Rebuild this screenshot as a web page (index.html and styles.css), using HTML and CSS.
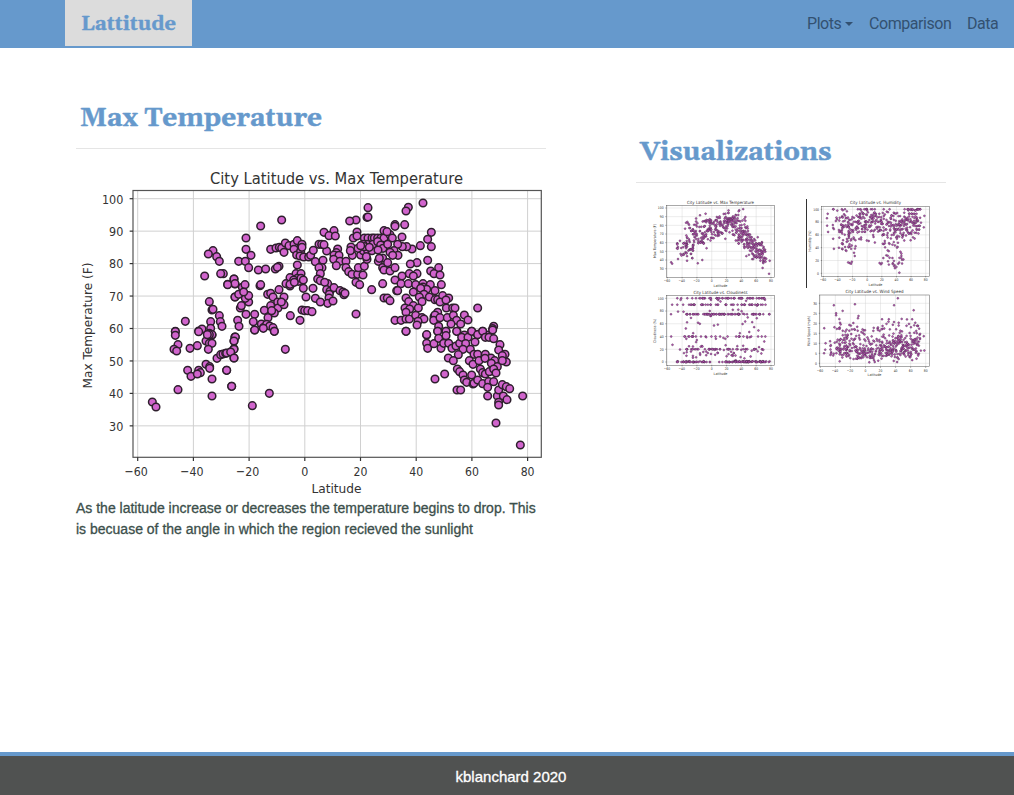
FILE: index.html
```html
<!DOCTYPE html>
<html lang="en">
<head>
<meta charset="utf-8">
<title>Lattitude</title>
<link rel="stylesheet" href="styles.css">
</head>
<body>
<nav class="navbar">
  <a class="brand">Lattitude</a>
  <div class="links">
    <a class="link plots">Plots<span class="caret"></span></a>
    <a class="link comparison">Comparison</a>
    <a class="link data">Data</a>
  </div>
</nav>
<main class="content">
  <section class="article">
    <h2 class="title">Max Temperature</h2>
    <svg class="plot" id="main" width="470" height="332" viewBox="0 0 470 332"></svg>
    <p class="summary">As the latitude increase or decreases the temperature begins to drop. This<br>is becuase of the angle in which the region recieved the sunlight</p>
  </section>
  <aside class="sidebar">
    <h2 class="title">Visualizations</h2>
    <div class="thumbs">
      <svg class="plot" id="temp" width="125" height="90" viewBox="0 0 125 90"></svg>
      <svg class="plot" id="humidity" width="125" height="90" viewBox="0 0 125 90"></svg>
      <svg class="plot" id="clouds" width="125" height="90" viewBox="0 0 125 90"></svg>
      <svg class="plot" id="wind" width="125" height="90" viewBox="0 0 125 90"></svg>
    </div>
  </aside>
</main>
<footer class="footer"><span>kblanchard 2020</span></footer>
<script src="charts.js"></script>
</body>
</html>
```
FILE: styles.css
```css
* { box-sizing: border-box; }
body {
  margin: 0;
  height: 795px;
  display: flex;
  flex-direction: column;
  background: #fff;
  color: #2f4f4f;
  font-family: "Liberation Sans", Arial, sans-serif;
  overflow: hidden;
}
.navbar {
  height: 48px;
  flex: none;
  display: flex;
  justify-content: space-between;
  align-items: flex-start;
  padding: 0 15px 0 65px;
  background: #6699cc;
}
.brand {
  width: 127px;
  height: 46px;
  background: #dcdcdc;
  color: #6699cc;
  font: bold 20px/48px Gelasio, Georgia, "DejaVu Serif Condensed", "DejaVu Serif", serif;
  text-align: center;
  -webkit-text-stroke: 0.4px;
}
.links { display: flex; gap: 16px; height: 48px; align-items: center; }
.link {
  display: flex;
  align-items: center;
  color: #335171;
  font: 16px/24px Roboto, sans-serif;
  letter-spacing: -0.45px;
  white-space: nowrap;
}
.plots { width: 46px; }
.comparison { width: 82px; }
.data { width: 32px; }
.caret {
  margin-left: 4px;
  border-top: 4.5px solid #335171;
  border-left: 4.5px solid transparent;
  border-right: 4.5px solid transparent;
}
.content { flex: 1; display: flex; gap: 90px; padding: 48px 68px 0 76px; }
.article { width: 470px; }
.sidebar { width: 310px; margin-top: 34px; }
.title {
  height: 53px;
  margin: 0 0 16px;
  padding: 0 4px;
  border-bottom: 1px solid #e5e5e5;
  color: #6699cc;
  font: bold 26.2px/46px Gelasio, Georgia, "DejaVu Serif Condensed", "DejaVu Serif", serif;
  white-space: nowrap;
  -webkit-text-stroke: 0.5px;
}
.plot { display: block; overflow: visible; font-family: "DejaVu Sans", sans-serif; fill: #333; }
.thumbs { display: grid; grid-template-columns: 125px 125px; column-gap: 30px; padding-left: 15px; }
.summary { margin: 1px 0 0; font-size: 14px; line-height: 21px; white-space: nowrap; color: #3c4f4b; -webkit-text-stroke: 0.3px; }
.footer {
  height: 43px;
  flex: none;
  border-top: 4px solid #6699cc;
  background: #505251;
  color: #fff;
  font-size: 15px;
  line-height: 42px;
  text-align: center;
  padding-left: 8px;
  -webkit-text-stroke: 0.3px;
}
```
FILE: charts.js
```js
// City samples, in thirds of a pixel, stored by plot tile: [tile x, tile y, "x,y ..."].
const tiles = [
[0,0,"411,257 397,267 422,275 430,289 386,333 442,326 434,326 474,342 455,358 400,410 408,435 411,433 430,452 404,470 433,470 438,484 328,469 298,499 368,498 378,492 404,490 400,505 408,510 477,396 477,357"],
[450,0,"426,128 423,157 426,156 390,165 371,168 167,165 104,183 60,219 60,253 75,271 38,289 58,289 68,308 97,315 119,312 148,312 159,304 154,307 134,253 150,249 160,247 167,249 178,234 174,262 189,242 204,238 214,227 228,238 204,253 212,270 224,258 222,273 233,276 228,247 214,300 248,276 254,271 262,256 268,290 291,286 302,258 279,238 287,238 294,239 294,202 324,197 309,212 328,213 393,201 382,219 393,213 335,252 331,263 324,270 339,271 323,283 342,289 331,302 360,289 360,308 368,320 379,271 375,246 373,257 378,328 395,328 411,330 397,308 415,304 390,352 401,359 437,374 470,356 474,399 470,279 457,289 460,280 470,308 474,315 404,270 412,257 423,283 425,257 438,257 415,219 426,219 438,219 445,219 455,219 465,219 474,197 474,219 423,238 441,238 455,230 464,240 471,250 411,238 415,245 430,247 456,255 396,250 404,242 421,275 288,308 279,308 283,326 275,342 283,347 305,356 296,352 302,374 312,379 324,368 310,388 342,377 351,381 354,389 357,385 309,399 305,415 321,408 268,400 283,411 261,370 240,396 232,370 210,326 225,326 214,340 192,338 203,345 218,349 180,356 192,363 192,358 205,352 225,340 232,345 159,374 174,396 125,388 134,385 141,396 155,411 134,422 156,429 174,419 145,444 115,436 126,458 137,437 193,452 222,466 228,435 236,437 245,437 258,440 60,448 86,448 82,470 86,495 106,477 112,488 122,478 131,483 141,488 145,499 35,466 39,484 43,429 46,422 68,411 58,400 27,396 38,388 68,392 49,367 57,359 53,381 24,342 27,356 5,359 102,362 104,359 27,516 390,447 166,411"],
[930,0,"111,114 67,127 60,138 27,179 27,184 56,179 136,202 125,223 136,245 103,242 78,252 62,245 49,245 48,216 35,238 12,209 19,219 5,238 3,200 24,257 12,262 36,271 20,271 5,293 12,318 27,308 27,345 48,333 125,286 93,293 73,297 158,308 134,318 144,326 162,330 93,326 70,326 82,333 45,356 67,356 89,359 111,356 133,359 166,359 111,366 122,373 147,377 32,377 35,377 82,381 104,370 114,388 100,396 130,396 60,399 68,410 108,410 82,422 57,429 71,432 97,429 60,442 4,399 12,407 147,404 155,404 170,392 162,411 188,399 181,429 200,429 207,429 180,405 275,429 155,442 144,455 147,450 143,466 162,458 184,458 202,451 235,450 246,465 212,466 224,477 195,477 158,484 27,466 45,466 60,462 70,462 89,451 108,458 114,462 96,469 93,480 60,499 122,510 155,499 180,499 213,499 257,499 290,499 323,484 320,491 274,508 235,510 302,510"],
[0,495,"298,5 298,16 368,5 306,44 294,58 302,63 342,55 364,47 408,14 400,14 390,33 400,40 408,40 397,58 394,14 335,121 345,139 368,121 373,128 364,132 390,103 401,110 401,115 408,147 452,121 467,169 408,198 306,179 229,216 240,231 423,85 434,74 441,72 449,70 464,66 474,56 474,84 474,33 477,22"],
[450,495,"28,21 24,33 24,58 2,69 14,66 24,84 2,121 17,169 79,227 130,190 178,58 86,0 112,-5 145,4"],
[930,495,"60,4 122,14 155,4 180,4 212,4 122,40 125,55 144,41 158,25 165,55 173,40 180,17 188,40 198,55 210,48 221,40 227,22 246,22 239,41 231,58 217,74 187,84 202,92 257,4 267,36 253,58 275,14 290,4 298,22 309,22 323,26 320,0 342,44 338,60 264,73 275,73 298,73 315,84 357,73 349,77 361,96 250,92 261,103 279,92 297,85 326,92 316,100 334,110 283,117 290,128 298,132 310,125 323,117 330,129 349,92 214,117 221,125 231,135 257,135 235,150 242,157 261,162 264,160 275,150 290,161 308,155 323,155 305,172 305,198 334,198 338,180 349,164 361,170 371,176 352,198 363,209 338,217 338,225 410,198 330,279 403,345 176,132 147,147 213,180 224,180"]
];
const temps = [];
for (const [ox, oy, list] of tiles)
  for (const pair of list.split(" ")) {
    const [x, y] = pair.split(",").map(Number);
    const px = (ox + x) / 3, py = (oy + y) / 3;
    temps.push([-60 + (px - 61.7) / 2.785, 100 - (py - 33.7) / 3.245]);
  }
const lats = temps.map(p => p[0]);

let seed = 41;
const rnd = () => (seed = (seed * 16807) % 2147483647) / 2147483647;
const near = (c, s) => c + s * (rnd() + rnd() + rnd() - 1.5);

const humidity = lats.map(l => {
  const r = rnd();
  let v;
  if (l > 15 && l < 50 && r < 0.36) v = 12 + rnd() * 58;
  else if (l < -15 && r < 0.4) v = 34 + rnd() * 45;
  else if (r < 0.06) v = 100;
  else if (r < 0.12) v = 93;
  else v = near(l > -10 && l < 20 ? 80 : 79, 26);
  return [l, Math.min(100, v)];
}).concat([[44,1],[-24,16],[-26,17],[-22,15],[-21,18],[-17,27],[-18,32],[38,8],[40,10],[37,11],[-55,86],[-54,93]]);

const clouds = lats.map(l => {
  const r = rnd();
  const band = r < .22 ? 0 : r < .3 ? 1 : r < .42 ? 75 : r < .52 ? 90 : r < .64 ? 100 : r < .7 ? 40 : r < .76 ? 20 : -1;
  let v = band < 0 ? rnd() * (rnd() < .4 ? 25 : 98) : band;
  if (l > -10 && l < 18 && v < 2) v = rnd() < .2 ? 0 : 75;
  return [l, v];
}).concat([[-55,75],[-53,27],[78,75],[77,0]]);

const wind = lats.map(l => {
  const base = l > -20 && l < 15 ? 2 : l > 55 ? 4 : 3;
  return [l, Math.max(.5, base + near(3, 4.5) + Math.pow(rnd(), 3.5) * 15)];
}).concat([[-42,29],[-14,29.5],[38,29],[43,32.5],[64,26.5],[-39,25],[-39,24],[-10,22.5],[22,22],[31,22],[62,22],[-55,5],[-53,10]]);

function chart(id, c) {
  let s = "";
  const X = v => c.x0 + (v + 60) * (c.x1 - c.x0) / 140;
  const Y = v => c.y0 + v * c.dy;
  const line = (x1, y1, x2, y2, color, w) => s += `<line x1="${x1}" y1="${y1}" x2="${x2}" y2="${y2}" stroke="${color}" stroke-width="${w}"/>`;
  const text = (t, x, y, w, size, anchor, extra = "") => s += `<text x="${x}" y="${y}" font-size="${size * 1.06}" text-anchor="${anchor}" textLength="${w}" lengthAdjust="spacingAndGlyphs" ${extra}>${t}</text>`;
  const [l, t, r, b] = c.box;
  for (let v = -60; v <= 80; v += 20) line(X(v), t, X(v), b, "#d0d0d0", c.grid);
  for (const v of c.ticks) line(l, Y(v), r, Y(v), "#d0d0d0", c.grid);
  for (const [x, y] of c.data) s += `<circle cx="${X(x)}" cy="${Y(y)}" r="${c.radius}" fill="${c.fill}" stroke="${c.stroke}" stroke-width="${c.edge}"/>`;
  s += `<rect x="${l}" y="${t}" width="${r - l}" height="${b - t}" fill="none" stroke="#555" stroke-width="${c.frame}"/>`;
  const f = c.font;
  for (let v = -60; v <= 80; v += 20) {
    line(X(v), b, X(v), b + f * .3, "#333", c.frame);
    const label = v < 0 ? "\u2212" + -v : "" + v;
    text(label, X(v) - (v < 0 ? f * .12 : 0), b + f * 1.5, (v < 0 ? 1.88 : v ? 1.12 : .57) * f, f, "middle");
  }
  for (const v of c.ticks) {
    line(l - f * .27, Y(v), l, Y(v), "#333", c.frame);
    text(v, l - f * .78, Y(v) + f * .39, String(v).length * f * .575, f, "end");
  }
  text(c.title[0], c.title[1], c.title[2], c.title[3], f * 1.2, "middle");
  text("Latitude", c.xl[0], c.xl[1], f * 4.05, f, "middle");
  text(c.yl[0], 0, 0, c.yl[3], f, "middle", `transform="translate(${c.yl[1]} ${c.yl[2]}) rotate(-90)"`);
  if (c.rule) line(.5, 0, .5, 89, "#333", 1);
  document.getElementById(id).innerHTML = s;
}
chart("main", {box:[57,25.5,465.3,292.3], x0:61.7, x1:451.6, y0:358.2, dy:-3.245, ticks:[30,40,50,60,70,80,90,100], data:temps, radius:3.8, edge:1.5, fill:"#d164cd", stroke:"#2e1f2d", grid:1, frame:1.2, font:12.4,
  title:["City Latitude vs. Max Temperature",260.5,19,253], xl:[260.5,328.3], yl:["Max Temperature (F)",16.3,160.5,126]});
const small = {radius:.95, edge:.4, fill:"#c457bf", stroke:"#38203a", grid:.4, frame:.5, font:3.4};
chart("temp", {...small, box:[15.3,6.3,123.3,78.3], x0:16.3, x1:120, y0:95.7, dy:-.867, ticks:[30,40,50,60,70,80,90,100], data:temps,
  title:["City Latitude vs. Max Temperature",69.5,5,67], xl:[69.5,88], yl:["Max Temperature (F)",4.5,42,34]});
chart("humidity", {...small, box:[15.7,7.3,123.3,77.3], x0:17.3, x1:119.7, y0:74.3, dy:-.64, ticks:[0,20,40,60,80,100], data:humidity,
  title:["City Latitude vs. Humidity",69.5,5.3,51], xl:[69.5,87], yl:["Humidity (%)",4.5,42,21], rule:true});
chart("clouds", {...small, box:[15.3,6.3,123.3,76.3], x0:16.3, x1:120, y0:73, dy:-.637, ticks:[0,20,40,60,80,100], data:clouds,
  title:["City Latitude vs. Cloudiness",69.5,4.6,54], xl:[69.5,86], yl:["Cloudiness (%)",4.5,42,24]});
chart("wind", {...small, box:[13.7,6,123.3,77.7], x0:14.3, x1:119.7, y0:74.3, dy:-2, ticks:[0,5,10,15,20,25,30], data:wind,
  title:["City Latitude vs. Wind Speed",68.5,4.3,58], xl:[68.5,87.3], yl:["Wind Speed (mph)",4,42,30]});
```
